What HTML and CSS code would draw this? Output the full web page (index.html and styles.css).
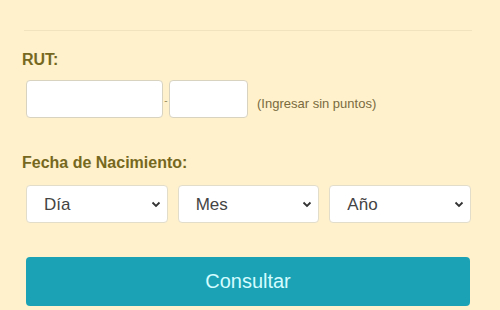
FILE: index.html
```html
<!DOCTYPE html>
<html lang="es">
<head>
    <meta charset="UTF-8">
    <title>Consulta RUT</title>
    <link rel="stylesheet" href="styles.css">
</head>
<body>
    <div class="form">
        <hr class="divider">

        <label class="label" for="rut">RUT:</label>
        <div class="rutrow">
            <input class="field rutnum" id="rut" name="rut">
            <span class="dash">-</span>
            <input class="field rutdv" id="dv" name="dv">
            <span class="hint">(Ingresar sin puntos)</span>
        </div>

        <label class="label fecha">Fecha de Nacimiento:</label>
        <div class="daterow">
            <select class="sel" name="dia"><option>Día</option></select>
            <select class="sel" name="mes"><option>Mes</option></select>
            <select class="sel" name="anio"><option>Año</option></select>
        </div>

        <button class="btn">Consultar</button>
    </div>
</body>
</html>
```

FILE: styles.css
```css
body {
    margin: 0;
    background-color: #fef1cb;
    font-family: "Liberation Sans", Arial, sans-serif;
}

.form {
    padding: 30px 28px 0 22px;
}

.divider {
    border: none;
    border-top: 1px solid #f1e3bd;
    margin: 0 0 0 2px;
}

.label {
    display: block;
    font-weight: bold;
    font-size: 16px;
    color: #76681e;
    margin-top: 20px;
    line-height: 18px;
}

.fecha {
    margin-top: 36px;
}

.rutrow {
    display: flex;
    align-items: center;
    margin: 11px 0 0 4px;
}

.field {
    box-sizing: border-box;
    height: 38px;
    border: 1px solid #d8d2c0;
    border-radius: 4px;
    background: #fff;
}

.rutnum {
    width: 137px;
}

.rutdv {
    width: 79px;
}

.dash {
    width: 6px;
    font-size: 10px;
    color: #9a8a60;
    text-align: center;
    margin-top: 2px;
}

.hint {
    font-size: 13px;
    color: #7a6a40;
    margin: 9px 0 0 9px;
}

.daterow {
    display: flex;
    gap: 10px;
    margin: 13px 1px 0 4px;
}

.sel {
    flex: 1;
    box-sizing: border-box;
    height: 38px;
    border: 1px solid #e2dccb;
    border-radius: 4px;
    background: #fff url("data:image/svg+xml,%3Csvg xmlns='http://www.w3.org/2000/svg' width='10' height='7' viewBox='0 0 10 7'%3E%3Cpath d='M1.5 1.5 L5 5 L8.5 1.5' fill='none' stroke='%23333' stroke-width='1.8'/%3E%3C/svg%3E") no-repeat right 6px center;
    appearance: none;
    -webkit-appearance: none;
    padding-left: 17px;
    font-family: "Liberation Sans", Arial, sans-serif;
    font-size: 17px;
    color: #444;
}

.btn {
    display: block;
    box-sizing: border-box;
    width: 444px;
    height: 49px;
    margin: 34px 0 0 4px;
    border: none;
    border-radius: 4px;
    background-color: #1ba3b5;
    color: #d4fcff;
    font-family: "Liberation Sans", Arial, sans-serif;
    font-size: 20px;
}
```
